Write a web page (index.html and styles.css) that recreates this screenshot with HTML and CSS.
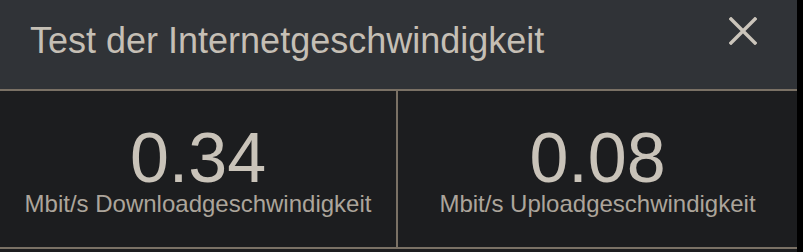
FILE: index.html
```html
<!DOCTYPE html>
<html lang="de">
<head>
    <meta charset="UTF-8">
    <title>Test der Internetgeschwindigkeit</title>
    <link rel="stylesheet" href="styles.css">
</head>
<body>
    <div class="dialog">
        <div class="dialog-header">
            <h1 class="dialog-title">Test der Internetgeschwindigkeit</h1>
            <button class="close-button" aria-label="Schließen">
                <svg width="28" height="28" viewBox="0 0 28 28">
                    <path d="M2 2 L26 26 M26 2 L2 26" stroke="#cbc5bb" stroke-width="3.4" stroke-linecap="square"/>
                </svg>
            </button>
        </div>
        <div class="speed-row">
            <div class="speed-cell">
                <div class="speed-value">0.34</div>
                <div class="speed-label">Mbit/s Downloadgeschwindigkeit</div>
            </div>
            <div class="speed-cell">
                <div class="speed-value">0.08</div>
                <div class="speed-label">Mbit/s Uploadgeschwindigkeit</div>
            </div>
        </div>
    </div>
</body>
</html>
```

FILE: styles.css
```css
body {
    margin: 0;
    background: #000;
    font-family: 'Liberation Sans', Arial, sans-serif;
    height: 252px;
    overflow: hidden;
}
.dialog {
    width: 797px;
    height: 252px;
    background: #1c1d1f;
}
.dialog-header {
    display: flex;
    justify-content: space-between;
    align-items: flex-start;
    height: 89px;
    background: #303337;
    border-bottom: 2px solid #7a7165;
}
.dialog-title {
    margin: 0;
    padding: 23px 0 0 30px;
    font-size: 36px;
    line-height: 36px;
    font-weight: normal;
    color: #c5bfb5;
}
.close-button {
    margin: 17px 40px 0 0;
    padding: 0;
    width: 28px;
    height: 28px;
    border: none;
    background: none;
    cursor: pointer;
}
.close-button svg {
    display: block;
}
.speed-row {
    display: flex;
    border-bottom: 2px solid #7a7165;
}
.speed-cell {
    flex: 1;
    height: 156px;
    padding-top: 36px;
    box-sizing: border-box;
    text-align: center;
}
.speed-cell:first-child {
    flex: 0 0 398px;
    border-right: 2px solid #7a7165;
}
.speed-value {
    font-size: 70px;
    line-height: 62px;
    color: #c9c3b9;
}
.speed-label {
    margin-top: 3px;
    font-size: 24px;
    line-height: 24px;
    color: #aca59b;
}
```
